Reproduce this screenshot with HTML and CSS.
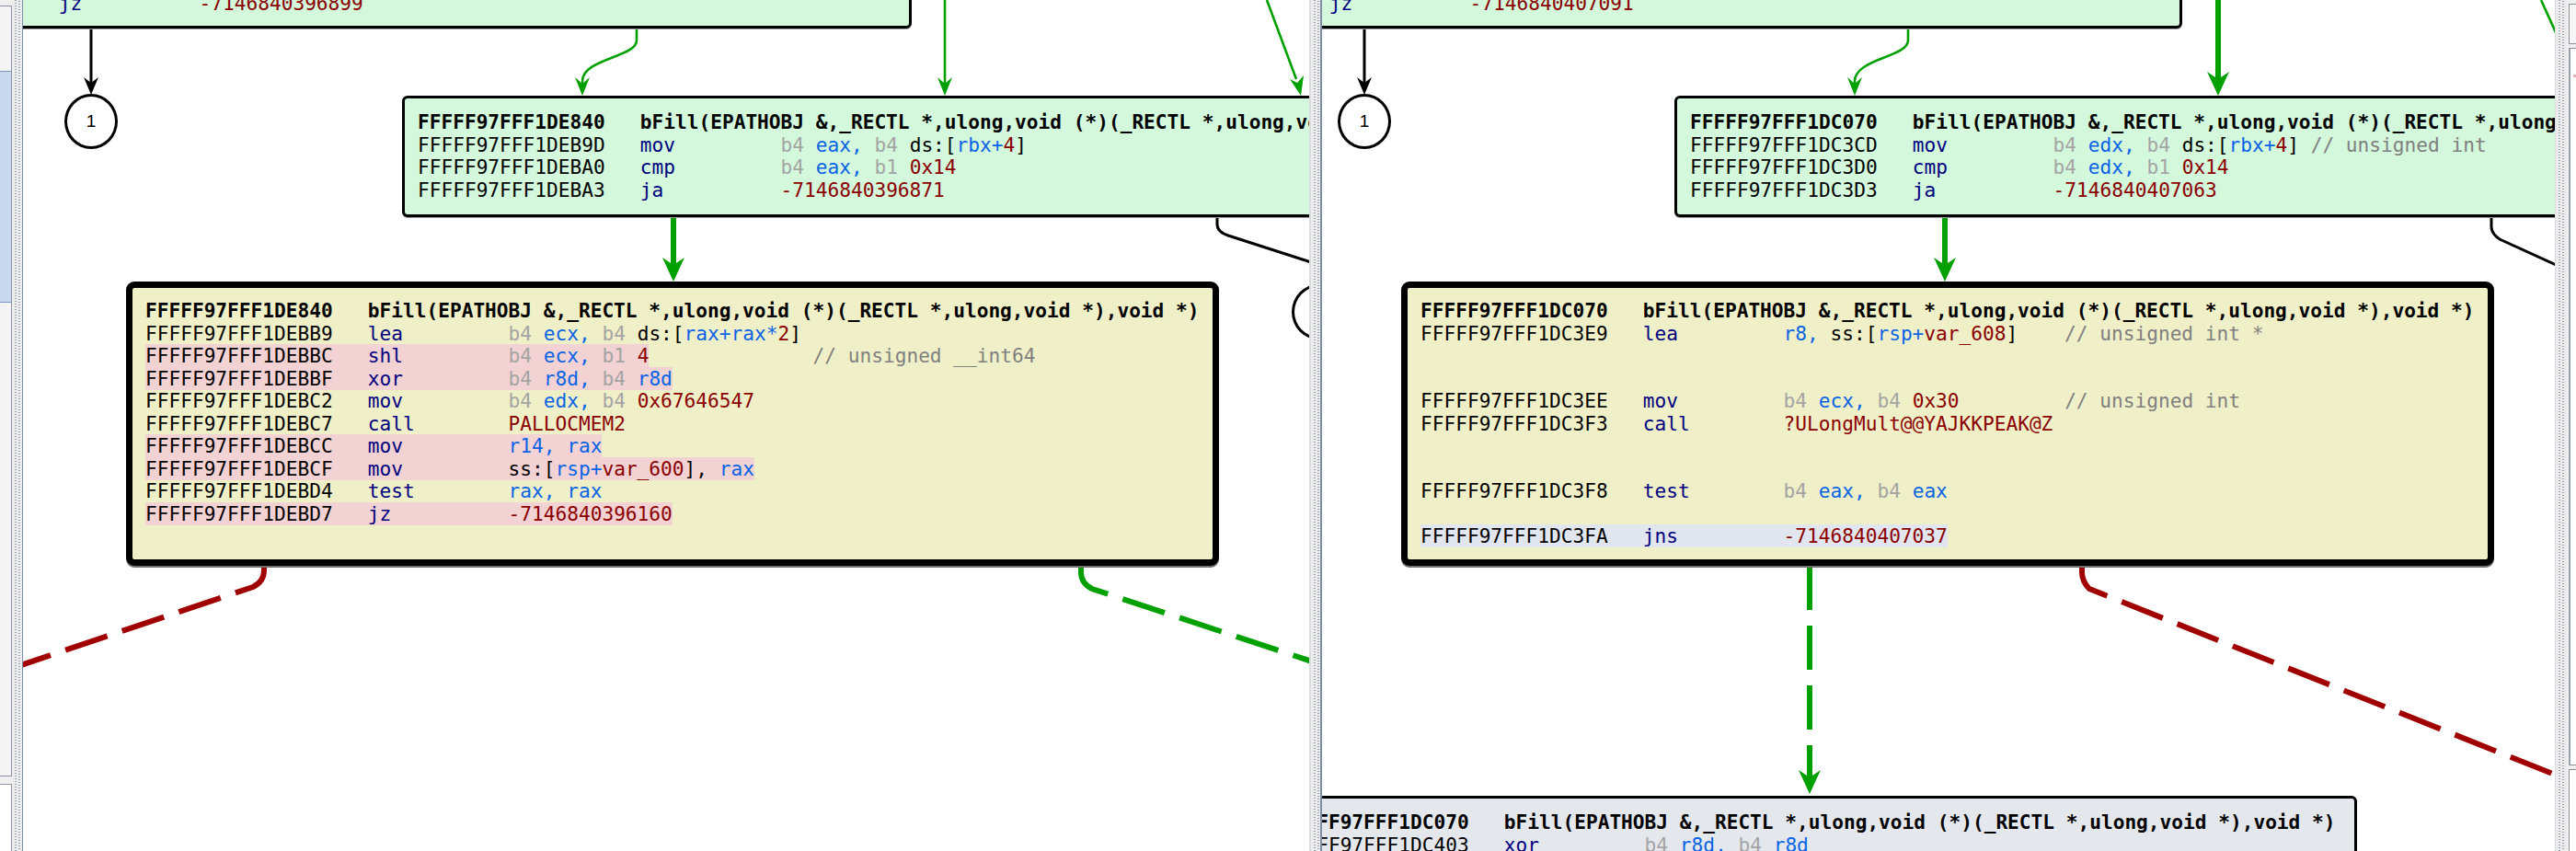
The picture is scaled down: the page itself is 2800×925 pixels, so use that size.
FILE: index.html
```html
<!DOCTYPE html>
<html>
<head>
<meta charset="utf-8">
<link rel="stylesheet" href="styles.css">
</head>
<body>
<div class="app">
  <div class="strip strip-left">
    <div class="sbox sbox-top"><div class="ssel"></div></div>
    <div class="sbox sbox-bottom"></div>
  </div>
  <div class="splitter sp-left"></div>

  <div class="canvas c1">
    <svg class="edges" width="1398" height="925" viewBox="0 0 1398 925">
      <path class="e-black" d="M74,31 L74,90"/>
      <path class="h-black" d="M74,103 L66,84 L74,90 L82,84 Z"/>
      <path class="e-green" d="M667,31 L667,44 C667,62 608,64 608,88 L608,92"/>
      <path class="h-green" d="M608,104 L600,84 L608,91 L616,84 Z"/>
      <path class="e-green" d="M1002,0 L1002,92"/>
      <path class="h-green" d="M1002,104 L994,84 L1002,91 L1010,84 Z"/>
      <path class="e-green" d="M1352,0 L1384,86"/>
      <path class="h-green" d="M1389,104 L1377,86 L1385,90 L1392,82 Z"/>
      <path class="e-thick" d="M707,236 L707,290"/>
      <path class="h-green" d="M707,306 L695,280 L707,288 L719,280 Z"/>
      <path class="e-black" d="M1298,236 L1298,244 Q1298,252 1310,256 L1400,285"/>
      <path class="e-red" d="M262,615 L262,620 Q262,632 250,638 L-20,729"/>
      <path class="e-gdash" d="M1150,615 L1150,622 Q1150,634 1162,640 L1410,722"/>
    </svg>
    <div class="circle cir1">1</div>
    <div class="circle cir1b">1</div>

    <div class="node green nA">
      <div class="row"> </div>
      <div class="row"> </div>
      <div class="row"> </div>
      <div class="row"><span class="ad">FFFFF97FFF1DEB97</span>   <span class="mn">jz</span>          <span class="nm">-7146840396899</span></div>
    </div>

    <div class="node green nB">
      <div class="row hd">FFFFF97FFF1DE840   bFill(EPATHOBJ &amp;,_RECTL *,ulong,void (*)(_RECTL *,ulong,void *),void *)</div>
      <div class="row"><span class="ad">FFFFF97FFF1DEB9D</span>   <span class="mn">mov</span>         <span class="sz">b4</span> <span class="rg">eax,</span> <span class="sz">b4</span> ds:[<span class="rg">rbx+</span><span class="nm">4</span>]</div>
      <div class="row"><span class="ad">FFFFF97FFF1DEBA0</span>   <span class="mn">cmp</span>         <span class="sz">b4</span> <span class="rg">eax,</span> <span class="sz">b1</span> <span class="nm">0x14</span></div>
      <div class="row"><span class="ad">FFFFF97FFF1DEBA3</span>   <span class="mn">ja</span>          <span class="nm">-7146840396871</span></div>
    </div>

    <div class="node yellow sel nC">
      <div class="row hd">FFFFF97FFF1DE840   bFill(EPATHOBJ &amp;,_RECTL *,ulong,void (*)(_RECTL *,ulong,void *),void *)</div>
      <div class="row"><span class="ad">FFFFF97FFF1DEBB9</span>   <span class="mn">lea</span>         <span class="sz">b4</span> <span class="rg">ecx,</span> <span class="sz">b4</span> ds:[<span class="rg">rax+rax*</span><span class="nm">2</span>]</div>
      <div class="row"><span class="hl"><span class="ad">FFFFF97FFF1DEBBC</span>   <span class="mn">shl</span>         <span class="sz">b4</span> <span class="rg">ecx,</span> <span class="sz">b1</span> <span class="nm">4</span></span>              <span class="cm">// unsigned __int64</span></div>
      <div class="row"><span class="hl"><span class="ad">FFFFF97FFF1DEBBF</span>   <span class="mn">xor</span>         <span class="sz">b4</span> <span class="rg">r8d,</span> <span class="sz">b4</span> <span class="rg">r8d</span></span></div>
      <div class="row"><span class="ad">FFFFF97FFF1DEBC2</span>   <span class="mn">mov</span>         <span class="sz">b4</span> <span class="rg">edx,</span> <span class="sz">b4</span> <span class="nm">0x67646547</span></div>
      <div class="row"><span class="ad">FFFFF97FFF1DEBC7</span>   <span class="mn">call</span>        <span class="nm">PALLOCMEM2</span></div>
      <div class="row"><span class="hl"><span class="ad">FFFFF97FFF1DEBCC</span>   <span class="mn">mov</span>         <span class="rg">r14, rax</span></span></div>
      <div class="row"><span class="hl"><span class="ad">FFFFF97FFF1DEBCF</span>   <span class="mn">mov</span>         ss:[<span class="rg">rsp+</span><span class="nm">var_600</span>], <span class="rg">rax</span></span></div>
      <div class="row"><span class="ad">FFFFF97FFF1DEBD4</span>   <span class="mn">test</span>        <span class="rg">rax, rax</span></div>
      <div class="row"><span class="hl"><span class="ad">FFFFF97FFF1DEBD7</span>   <span class="mn">jz</span>          <span class="nm">-7146840396160</span></span></div>
      <div class="row"> </div>
    </div>
  </div>

  <div class="splitter sp-mid"></div>

  <div class="canvas c2">
    <svg class="edges" width="1340" height="925" viewBox="0 0 1340 925">
      <path class="e-black" d="M46,31 L46,90"/>
      <path class="h-black" d="M46,103 L38,84 L46,90 L54,84 Z"/>
      <path class="e-green" d="M637,31 L637,44 C637,62 579,64 579,88 L579,92"/>
      <path class="h-green" d="M579,104 L571,84 L579,91 L587,84 Z"/>
      <path class="e-thick" d="M974,0 L974,90"/>
      <path class="h-green" d="M974,104 L962,78 L974,86 L986,78 Z"/>
      <path class="e-green" d="M1325,0 L1350,55"/>
      <path class="e-thick" d="M677,236 L677,290"/>
      <path class="h-green" d="M677,306 L665,280 L677,288 L689,280 Z"/>
      <path class="e-black" d="M1271,236 L1271,246 Q1271,254 1280,260 L1350,292"/>
      <path class="e-gdash" d="M530,615 L530,848"/>
      <path class="h-green" d="M530,863 L518,837 L530,845 L542,837 Z"/>
      <path class="e-red" d="M826,615 L826,622 Q826,632 834,640 L1360,850"/>
    </svg>
    <div class="circle cir2">1</div>

    <div class="node green nA2">
      <div class="row"> </div>
      <div class="row"> </div>
      <div class="row"> </div>
      <div class="row"><span class="ad">FFFFF97FFF1DC3C7</span>   <span class="mn">jz</span>          <span class="nm">-7146840407091</span></div>
    </div>

    <div class="node green nB2">
      <div class="row hd">FFFFF97FFF1DC070   bFill(EPATHOBJ &amp;,_RECTL *,ulong,void (*)(_RECTL *,ulong,void *),void *)</div>
      <div class="row"><span class="ad">FFFFF97FFF1DC3CD</span>   <span class="mn">mov</span>         <span class="sz">b4</span> <span class="rg">edx,</span> <span class="sz">b4</span> ds:[<span class="rg">rbx+</span><span class="nm">4</span>] <span class="cm">// unsigned int</span></div>
      <div class="row"><span class="ad">FFFFF97FFF1DC3D0</span>   <span class="mn">cmp</span>         <span class="sz">b4</span> <span class="rg">edx,</span> <span class="sz">b1</span> <span class="nm">0x14</span></div>
      <div class="row"><span class="ad">FFFFF97FFF1DC3D3</span>   <span class="mn">ja</span>          <span class="nm">-7146840407063</span></div>
    </div>

    <div class="node yellow sel nC2">
      <div class="row hd">FFFFF97FFF1DC070   bFill(EPATHOBJ &amp;,_RECTL *,ulong,void (*)(_RECTL *,ulong,void *),void *)</div>
      <div class="row"><span class="ad">FFFFF97FFF1DC3E9</span>   <span class="mn">lea</span>         <span class="rg">r8,</span> ss:[<span class="rg">rsp+</span><span class="nm">var_608</span>]    <span class="cm">// unsigned int *</span></div>
      <div class="row"> </div>
      <div class="row"> </div>
      <div class="row"><span class="ad">FFFFF97FFF1DC3EE</span>   <span class="mn">mov</span>         <span class="sz">b4</span> <span class="rg">ecx,</span> <span class="sz">b4</span> <span class="nm">0x30</span>         <span class="cm">// unsigned int</span></div>
      <div class="row"><span class="ad">FFFFF97FFF1DC3F3</span>   <span class="mn">call</span>        <span class="nm">?ULongMult@@YAJKKPEAK@Z</span></div>
      <div class="row"> </div>
      <div class="row"> </div>
      <div class="row"><span class="ad">FFFFF97FFF1DC3F8</span>   <span class="mn">test</span>        <span class="sz">b4</span> <span class="rg">eax,</span> <span class="sz">b4</span> <span class="rg">eax</span></div>
      <div class="row"> </div>
      <div class="row"><span class="hl2"><span class="ad">FFFFF97FFF1DC3FA</span>   <span class="mn">jns</span>         <span class="nm">-7146840407037</span></span></div>
    </div>

    <div class="node grey nD">
      <div class="row hd">FFFFF97FFF1DC070   bFill(EPATHOBJ &amp;,_RECTL *,ulong,void (*)(_RECTL *,ulong,void *),void *)</div>
      <div class="row"><span class="ad">FFFFF97FFF1DC403</span>   <span class="mn">xor</span>         <span class="sz">b4</span> <span class="rg">r8d,</span> <span class="sz">b4</span> <span class="rg">r8d</span></div>
      <div class="row"><span class="ad">FFFFF97FFF1DC406</span>   <span class="mn">mov</span>         <span class="sz">b4</span> <span class="rg">ecx,</span> <span class="sz">b4</span> <span class="nm">0x30</span></div>
    </div>
  </div>

  <div class="splitter sp-right"></div>
  <div class="strip strip-right">
    <div class="rbox rbox-top"></div>
    <div class="rbox rbox-main"><div class="rmark"></div></div>
    <div class="rbox rbox-bottom"></div>
  </div>
</div>
</body>
</html>
```

FILE: styles.css
```css
html, body {
  margin: 0;
  padding: 0;
}
body {
  width: 2800px;
  height: 925px;
  overflow: hidden;
  background: #ffffff;
  font-family: "DejaVu Sans Mono", "Liberation Mono", monospace;
}
.app {
  display: flex;
  width: 2800px;
  height: 925px;
}

/* side strips */
.strip {
  flex: none;
  height: 925px;
  background: #f0f0f0;
  display: flex;
  flex-direction: column;
  box-sizing: border-box;
}
.strip-left {
  width: 13px;
  padding: 6px 0 0 0;
  gap: 8px;
}
.sbox {
  box-sizing: border-box;
  border: 1px solid #8a94a2;
  border-left: none;
  background: #f4f4f4;
}
.sbox-top {
  height: 838px;
  padding-top: 70px;
}
.ssel {
  height: 250px;
  background: #c9d8ec;
  border-top: 1px solid #7d98c0;
  border-bottom: 1px solid #7d98c0;
}
.sbox-bottom {
  flex: 1;
  background: #ffffff;
  border-bottom: none;
}
.strip-right {
  width: 10px;
  padding: 4px 0 0 2px;
  gap: 4px;
}
.rbox {
  box-sizing: border-box;
  border: 1px solid #8a8f98;
  border-right: none;
  background: #ffffff;
}
.rbox-top {
  height: 44px;
  background: #f6f6f6;
}
.rbox-main {
  height: 780px;
  border-left: 2px solid #9aa0a8;
  position: relative;
}
.rmark {
  position: absolute;
  top: 28px;
  right: 0;
  width: 3px;
  height: 3px;
  background: #e8b0b0;
}
.rbox-bottom {
  flex: 1;
  border-bottom: none;
}

/* splitters */
.splitter {
  flex: none;
  height: 925px;
  box-sizing: border-box;
  background-color: #ececec;
  background-image:
    repeating-linear-gradient(to bottom, #9aa4b4 0 1px, transparent 1px 3px),
    repeating-linear-gradient(to bottom, #9aa4b4 0 1px, transparent 1px 3px);
  background-size: 2px 100%, 2px 100%;
  background-repeat: no-repeat;
}
.sp-left {
  width: 12px;
  border-right: 1px solid #7f8da3;
  background-position: 3px 0, 7px 1px;
}
.sp-mid {
  width: 14px;
  border-left: 2px solid #dcdcdc;
  border-right: 2px solid #7f8da3;
  background-position: 3px 0, 7px 1px;
}
.sp-right {
  width: 13px;
  border-left: 1px solid #dcdcdc;
  background-position: 3px 0, 7px 1px;
}

/* canvases */
.canvas {
  flex: none;
  position: relative;
  overflow: hidden;
  height: 925px;
  background: #ffffff;
}
.c1 { width: 1398px; }
.c2 { width: 1340px; }

.edges {
  position: absolute;
  left: 0;
  top: 0;
  overflow: visible;
}
.e-black { fill: none; stroke: #000000; stroke-width: 3; }
.e-green { fill: none; stroke: #00a000; stroke-width: 2.6; }
.e-thick { fill: none; stroke: #00a000; stroke-width: 6; }
.e-red { fill: none; stroke: #a00000; stroke-width: 6; stroke-dasharray: 48 17; }
.e-gdash { fill: none; stroke: #00a000; stroke-width: 6; stroke-dasharray: 48 17; }
.h-black { fill: #000000; }
.h-green { fill: #00a000; }

.circle {
  position: absolute;
  width: 58px;
  height: 60px;
  box-sizing: border-box;
  border: 3px solid #000000;
  border-radius: 50%;
  background: #ffffff;
  display: flex;
  align-items: center;
  justify-content: center;
  font-family: "Liberation Sans", Arial, sans-serif;
  font-size: 19px;
  color: #000000;
}
.cir1 { left: 45px; top: 102px; }
.cir1b { left: 1379px; top: 309px; }
.cir2 { left: 17px; top: 102px; }

/* nodes */
.node {
  position: absolute;
  width: 1186px;
  box-sizing: border-box;
  border: 3px solid #000000;
  border-radius: 6px;
  padding: 14px 14px;
  box-shadow: 0 1px 0 #9a9a9a;
  font-size: 21.15px;
  line-height: 24.5px;
  color: #000000;
}
.node.sel {
  width: 1188px;
  border-width: 7px;
  border-radius: 9px;
  padding: 13px 14px;
  box-shadow: 0 2px 0 #707070;
}
.green { background: #d3f8dc; }
.yellow { background: #f0f0c8; }
.grey { background: #e4e8ed; }

.row {
  white-space: pre;
  height: 24.5px;
}
.hd { font-weight: bold; }
.ad { color: #000000; }
.mn { color: #000080; }
.sz { color: #a4a4a4; }
.rg { color: #0a64e6; }
.nm { color: #8b0000; }
.cm { color: #808080; }
.hl { background: #f2d2d2; }
.hl2 { background: #e2e6ee; }

.nA { left: -220px; top: -99px; height: 130px; }
.nB { left: 412px; top: 104px; height: 132px; }
.nC { left: 112px; top: 306px; height: 309px; }

.nA2 { left: -251px; top: -99px; height: 130px; }
.nB2 { left: 383px; top: 104px; height: 132px; }
.nC2 { left: 86px; top: 306px; height: 309px; }
.nD { left: -61px; top: 865px; height: 132px; }
```
